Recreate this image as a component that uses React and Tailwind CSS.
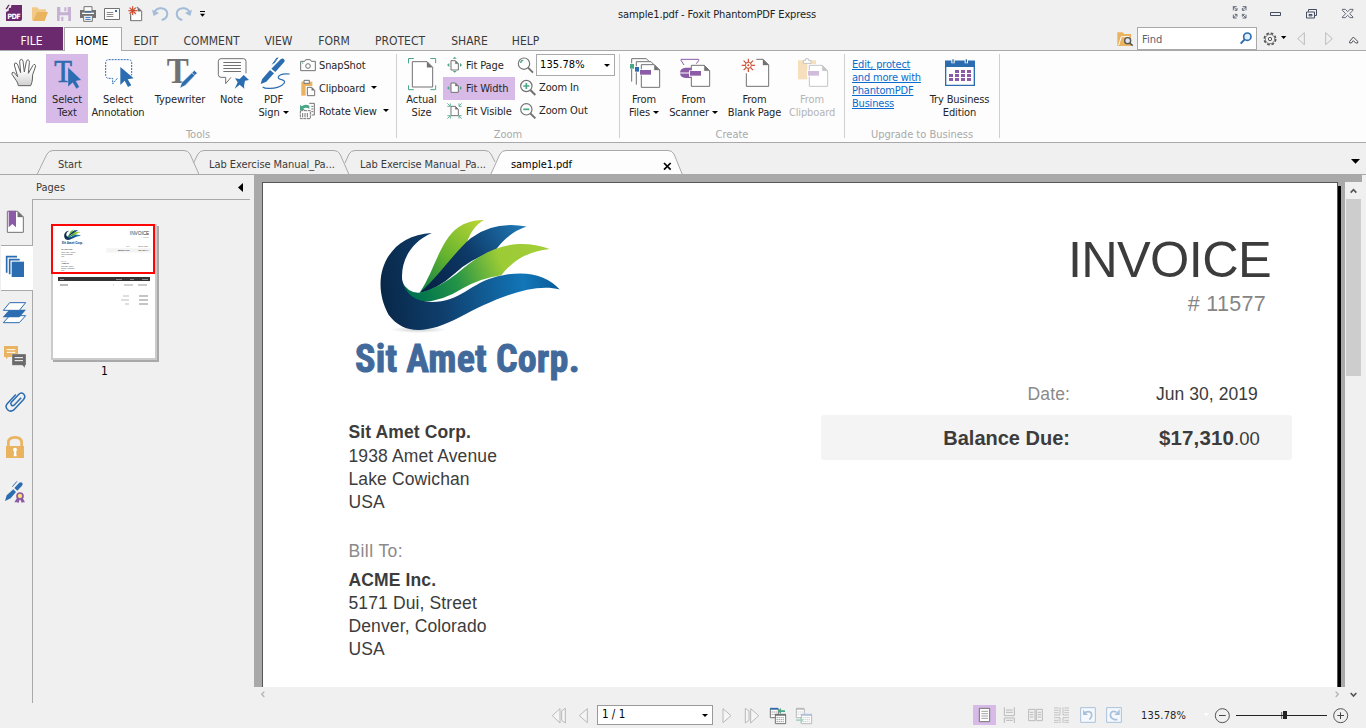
import React from "react";

const B = "#2c6cb0", G = "#727272", GR = "#4aa785", OR = "#e9b35f", PU = "#8c5ba6", LG = "#b9b9b9";

/* Icons are drawn on a grid of three units per pixel. */
const Ic = ({ v, children, className = "" }) => {
  const [, , w, h] = v.split(" ").map(Number);
  return (
    <svg viewBox={v} width={w / 3} height={h / 3} className={"block shrink-0 overflow-visible " + className} fill="none">
      {children}
    </svg>
  );
};

const Star = ({ x, y, r = 14 }) => (
  <g stroke="#d0492f" strokeWidth="3.500">
    {[0, 45, 90, 135].map((a) => (
      <path key={a} d={`M${x - r} ${y}h${r * 2}`} transform={`rotate(${a} ${x} ${y})`} />
    ))}
  </g>
);

const Cursor = ({ x, y }) => (
  <path d={`M${x} ${y}l40 34-18 3 11 18-10 5-10-19-13 13z`} fill={B} />
);

const Page = ({ x, y, w, h, f = 16, c = G }) => (
  <>
    <path d={`M${x} ${y}h${w - f}l${f} ${f}v${h - f}h${-w}z`} fill="#fff" stroke={c} strokeWidth="3" />
    <path d={`M${x + w - f} ${y}v${f}h${f}z`} fill={c} stroke={c} />
  </>
);

const Caret = ({ className = "" }) => (
  <svg viewBox="0 0 6 3" width="6" height="3" className={"inline-block shrink-0 " + className}><path d="M0 0h6L3 3z" fill="#000" /></svg>
);

function TitleBar() {
  return (
    <div className="flex h-[27px]">
      <Ic v="0 0 84 81">
        <path d="M27 24l6-1 1-8h32v42q0 6-6 6H18V36l8-4z" fill="#6b2a6d" />
        <path d="M18 27l6-6M22 20l6-5" stroke="#6b2a6d" strokeWidth="4" />
        <text x="22" y="56" fill="#fff" fontFamily="DejaVu Sans Condensed" fontWeight="bold" fontSize="22" textLength="40">PDF</text>
      </Ic>
      <Ic v="84 0 72 81"><path d="M96 22h15l6 6h21v9h-26l-13 24h-3z" fill="#f2c988" /><path d="M111 36h33l-10 27H98z" fill="#e9b35f" /></Ic>
      <Ic v="156 0 72 81"><path d="M171 21h42v42h-42z" fill="#c6b0d4" /><path d="M181 21h22v16h-22zM179 46h26v17h-26z" fill="#f0f0f0" /><path d="M193 22h6v12h-6zM184 50h6v13h-6z" fill="#c6b0d4" /></Ic>
      <Ic v="228 0 72 81"><path d="M240 30h48v24h-48z" fill={G} /><path d="M252 20h24v14h-24z" fill="#fff" stroke={G} strokeWidth="3" /><path d="M246 38h36v4h-36z" fill="#fff" /><path d="M251 46h26v18h-26z" fill="#fff" stroke={G} strokeWidth="3" /><path d="M255 36h18M256 52h16M256 58h16" stroke={B} strokeWidth="3" /></Ic>
      <Ic v="300 0 72 81"><path d="M313.500 25.500h45v33h-45z" fill="#fff" stroke={G} strokeWidth="3" /><path d="M320 37.500h20M320 43.500h20M320 49.500h20" stroke={G} strokeWidth="2.500" /><path d="M345 30h6v6h-6z" fill={B} /></Ic>
      <Ic v="372 0 72 81"><Page x={392} y={22} w={33} h={40} f={12} /><path d="M384 17h26v30h-26z" fill="#f0f0f0" /><path d="M392 42v20" stroke={G} strokeWidth="3" /><Star x={398} y={32} r={13} /></Ic>
      <Ic v="444 0 72 81"><path d="M463 38q6-15 22-13t17 17q-2 15-17 18" stroke="#a3bcd8" strokeWidth="6" /><path d="M456 29l5 19 16-9z" fill="#a3bcd8" /></Ic>
      <Ic v="516 0 72 81"><path d="M569 38q-6-15-22-13t-17 17q2 15 17 18" stroke="#a3bcd8" strokeWidth="6" /><path d="M576 29l-5 19-16-9z" fill="#a3bcd8" /></Ic>
      <Ic v="588 0 42 81"><path d="M600 34.500h15" stroke="#000" strokeWidth="3" /><path d="M600 41h15l-7.500 9z" fill="#000" /></Ic>
      <div className="w-[1014px] pt-[2px] text-center text-[11px] leading-[26px] tracking-[-0.14px] text-[#222]">sample1.pdf - Foxit PhantomPDF Express</div>
      <Ic v="372 0 426 81" className="-ml-[0px]">
        <g stroke="#454d60" strokeWidth="3">
          <path d="M400 31V20h10M400 20l9 9M428 20h10v11M438 20l-9 9M400 44v10h10M400 54l9-9M428 54h10V44M438 54l-9-9M404 31h7v-7M434 31h-7v-7M404 43h7v7M434 43h-7v7" strokeWidth="2.500" />
          <path d="M511.500 37.500h30v9h-30z" />
          <path d="M625.500 34.500v-6h24v18h-6M619.500 36h24v18h-24zM627 43.500h9v4h-9z" />
          <path d="M727 28h9l7 7 7-7h9v3l-10 10 10 10v2h-9l-7-7-7 7h-9v-2l10-10-10-10z" strokeWidth="2.500" />
        </g>
      </Ic>
    </div>
  );
}

const menu = [["EDIT", "w-[48px]"], ["COMMENT", "w-[83px]"], ["VIEW", "w-[51px]"], ["FORM", "w-[60px]"], ["PROTECT", "w-[72px]"], ["SHARE", "w-[67px]"], ["HELP", "w-[45px]"]];

function MenuBar() {
  return (
    <div className="flex h-[24px] border-b border-[#a9a9a9] text-[12px] leading-[28px] text-[#3b3b3b]">
      <div className="h-[23px] w-[63px] bg-[#6b2a6d] text-center text-white">FILE</div>
      <div className="ml-px -mb-px h-[24px] w-[58px] border border-b-0 border-[#a9a9a9] bg-[#fdfdfd] pr-[2px] text-center leading-[26px] text-black">HOME</div>
      {menu.map(([t, w]) => <div key={t} className={w + " text-center"}>{t}</div>)}
      <div className="ml-auto flex">
        <Ic v="42 81 69 69"><path d="M52 97h16l4 5h21v36H52z" fill="#e9b35f" /><path d="M56 136l8-26h24" stroke="#fff" strokeWidth="3" /><circle cx="83" cy="122" r="9" fill="#dfe8ee" stroke="#555" strokeWidth="4" /><path d="M89 129l9 8" stroke="#555" strokeWidth="5" /></Ic>
        <div className="flex h-[23px] w-[120px] justify-between border border-[#a9a9a9] bg-white pl-[4px] text-[11px] leading-[23px] text-[#5a6070]">
          Find
          <Ic v="411 84 54 63"><circle cx="439" cy="110" r="11" fill="#e3eefb" stroke={B} strokeWidth="5" /><path d="M431 118l-12 13" stroke={B} strokeWidth="6" /></Ic>
        </div>
        <Ic v="471 81 327 69">
          <circle cx="510" cy="117" r="17" stroke="#555" strokeWidth="5" strokeDasharray="8 5.350" /><circle cx="510" cy="117" r="14" fill="#f0f0f0" stroke="#555" strokeWidth="2" /><circle cx="510" cy="117" r="5" stroke="#555" strokeWidth="3" />
          <path d="M543 108h16l-8 9z" fill="#000" />
          <path d="M613 98v36l-20-18zM677 98v36l20-18z" stroke="#b0b0b0" strokeWidth="2.500" />
          <path d="M749 124l11-13 13 13v5h-6l-7-7-6 7h-5z" stroke="#50505a" strokeWidth="3" />
        </Ic>
      </div>
    </div>
  );
}

function Tool({ w, icon, a, b, caret, active, dim }) {
  return (
    <div className={`flex h-[69px] shrink-0 flex-col items-center pt-[3px] ${w} ${active ? "bg-[#d7bae8]" : ""} ${dim ? "text-[#b4b4b4]" : ""}`}>
      {icon}
      <div className="mt-[2px] text-center leading-[13px] whitespace-nowrap">
        <div>{a}</div>
        {b && <div>{b}{caret && <Caret className="mb-[2px] ml-[3px]" />}</div>}
      </div>
    </div>
  );
}

function Group({ w, name, children }) {
  return (
    <div className={`flex h-[84px] shrink-0 flex-col border-r border-[#d0d0d0] ${w}`}>
      <div className="flex h-[69px]">{children}</div>
      <div className="h-[15px] pt-[4px] text-center leading-[15px] tracking-[0px] text-[#a9a9a9]">{name}</div>
    </div>
  );
}

const Small = ({ icon, t, caret, active, w = "", g = "gap-[3px]", low = "pt-[2px]" }) => (
  <div className={`flex h-[23px] items-center whitespace-nowrap ${g} ${w} ${active ? "bg-[#d7bae8]" : ""}`}>
    {icon}<span className={low}>{t}</span>{caret && <Caret className="mb-[2px] ml-[3px]" />}
  </div>
);

const FitPage = ({ y }) => <Page x={483} y={y} w={22} h={28} f={9} />;

function Mag({ y, sign }) {
  return (
    <g transform={sign ? undefined : "translate(-7 0)"}>
      <circle cx="709" cy={y} r="17" stroke={G} strokeWidth="3.500" />
      <path d={`M721 ${y + 12}l15 15`} stroke={G} strokeWidth="6" />
      {sign ? <path d={sign === "+" ? `M700 ${y}h18M709 ${y - 9}v18` : `M700 ${y}h18`} stroke={GR} strokeWidth="5" /> : <path d={`M699 ${y - 2}q0-8 8-8`} stroke={GR} strokeWidth="4" />}
    </g>
  );
}

function Ribbon() {
  return (
    <div className="flex h-[92px] border-b border-[#a9a9a9] bg-[#fdfdfd] pt-[3px] text-[11px] tracking-[-0.12px] text-[#262626]">
      <Group w="w-[397px]" name="Tools">
        <Tool w="ml-[2px] w-[44px]" a="Hand" icon={
          <Ic v="6 171 132 102">
            <defs><linearGradient id="hand" x1="0" y1="0" x2="0" y2="1"><stop offset=".4" stopColor="#fff" /><stop offset="1" stopColor="#cfcfcf" /></linearGradient></defs>
            <path d="M51 257q-1-8-6-15L32 223q-2-6 4-6 4 0 7 6l6 7-10-35q0-7 5-6 4 1 6 8l8 21-3-34q1-6 5-6t5 6l4 32 6-31q2-7 6-5 4 1 3 8l-3 32 14-24q3-5 6-2 3 2 1 7l-8 23-1 16q-1 8-5 17z" transform="translate(4 0)" fill="url(#hand)" stroke="#606060" strokeWidth="3" strokeLinejoin="round" />
          </Ic>} />
        <Tool w="w-[42px]" a="Select" b="Text" active icon={
          <Ic v="138 171 126 102"><text x="163" y="246" fontFamily="Liberation Serif" fontSize="96" stroke={B} strokeWidth="2" textLength="53" lengthAdjust="spacingAndGlyphs" fill={B}>T</text><path d="M204 202l40 38-16 3 10 18-9 5-11-18-14 12z" fill={B} stroke="#d7bae8" strokeWidth="1" /></Ic>} />
        <Tool w="w-[60px]" a="Select" b="Annotation" icon={
          <Ic v="264 171 180 102"><path d="M352 235l-14 17v-17h-11q-10 0-10-10v-37q0-9 9-9h59q10 0 10 9v38" stroke={B} strokeWidth="3" strokeDasharray="6 3" /><Cursor x={361} y={201} /></Ic>} />
        <Tool w="w-[64px]" a="Typewriter" icon={
          <Ic v="444 171 192 102"><text x="500" y="249" fontFamily="Liberation Serif" fontWeight="bold" fontSize="108" textLength="66" lengthAdjust="spacingAndGlyphs" fill={G}>T</text><path d="M583 211l9 8-37 38-16 8 6-17z" fill={B} stroke="#fdfdfd" strokeWidth="2" /><path d="M576 219l9 8" stroke="#fff" strokeWidth="2" /></Ic>} />
        <Tool w="w-[39px]" a="Note" icon={
          <Ic v="636 171 117 102"><path d="M693 232l-16 19v-19h-14q-8 0-8-8v-40q0-8 8-8h67q8 0 8 8v36" stroke={G} strokeWidth="3" /><path d="M670 187.500h53M670 196.500h53M670 205.500h53M670 214.500h53" stroke={G} strokeWidth="3" /><path d="M731 225l16 15-12 2-3 15 1 9-14-12-15 12 9-19-8-12 14 2z" fill={B} /></Ic>} />
        <Tool w="w-[45px]" a="PDF" b="Sign" caret icon={
          <Ic v="753 171 135 102"><path d="M842 178q7-5 11 1 3 4-1 8l-26 29-12-10zM810 210l12 10-23 25-17 7 4-14z" fill={B} /><path d="M817 193l14-20M822 190l12-17" stroke={B} strokeWidth="3" /><path d="M869 222q-30-3-34 9-1 6 10 8 16 4 3 15-13 10-38 11-16 1-22-4" stroke={B} strokeWidth="3.500" /></Ic>} />
        <div className="ml-[4px] flex flex-col">
          <Small t="SnapShot" icon={<Ic v="30 12 48 69"><path d="M32 34h12l3-5h14l3 5h12v28H32z" stroke={G} strokeWidth="3" /><circle cx="54" cy="48" r="7" stroke={G} strokeWidth="3" /><path d="M36 39h4" stroke={GR} strokeWidth="3" /></Ic>} />
          <Small t="Clipboard" caret icon={<Ic v="30 81 48 69"><path d="M34 95h33v42H34z" fill={OR} /><path d="M42 91h16v9H42z" fill="#fff" stroke={G} strokeWidth="3" /><path d="M47 108h30v32H47z" fill="#fff" /><Page x={52} y={112} w={22} h={25} f={9} /></Ic>} />
          <Small t="Rotate View" caret icon={<Ic v="30 150 48 69"><path d="M58 160h15v35h-8M64 169h6M64 177h6M64 185h6" stroke={G} strokeWidth="3" /><path d="M31 182h30v24H31z" fill="#fff" stroke={G} strokeWidth="3" strokeDasharray="9 2" /><path d="M38 189v13M45 189v13M52 189v13" stroke={G} strokeWidth="3" /><path d="M30 164l5 5q10-9 23-2v9q-12-6-18 0l5 4H30z" fill={GR} /></Ic>} />
        </div>
      </Group>
      <Group w="w-[223px]" name="Zoom">
        <Tool w="ml-[3px] w-[43px]" a="Actual" b="Size" icon={
          <Ic v="330 18 129 102"><path d="M355.500 37V22.500h16M421 22.500h16v14M355.500 103v13h16M437 103v13h-16" stroke={GR} strokeWidth="3" /><Page x={367} y={32} w={61} h={76} f={17} /></Ic>} />
        <div className="flex flex-col">
          <Small w="w-[72px]" g="gap-[1px]" t="Fit Page" icon={<Ic v="459 12 66 69"><FitPage y={32} /><path d="M494 20l6 6h-12zM494 68l6-5h-12zM471 45l7-6v12zM516 45l-6-6v12z" fill={GR} /></Ic>} />
          <Small w="w-[72px]" g="gap-[1px]" t="Fit Width" active icon={<Ic v="459 81 66 69"><FitPage y={99} /><path d="M471 114l7-6v12zM516 114l-6-6v12z" fill={GR} /></Ic>} />
          <Small w="w-[72px]" g="gap-[1px]" t="Fit Visible" icon={<Ic v="459 150 66 69"><FitPage y={169} /><path d="M472 160l8 8M515 160l-8 8M472 206l8-8M515 206l-8-8M472 169h9v-9M515 169h-8v-9M472 197h9v9M515 197h-8v9" stroke={GR} strokeWidth="2.500" /></Ic>} />
        </div>
        <div className="ml-[3px] flex flex-col">
          <div className="flex h-[23px]">
            <Ic v="684 12 54 69"><Mag y={41} /></Ic>
            <div className="flex h-[22px] w-[79px] items-center justify-between border border-[#a9a9a9] bg-white pr-[4px] pl-[3px] tracking-[0.1px] text-black">135.78%<Caret /></div>
          </div>
          <Small g="gap-[2px]" low="" t="Zoom In" icon={<Ic v="684 81 57 69"><Mag y={108} sign="+" /></Ic>} />
          <Small g="gap-[2px]" low="" t="Zoom Out" icon={<Ic v="684 150 57 69"><Mag y={178} sign="-" /></Ic>} />
        </div>
      </Group>
      <Group w="w-[225px]" name="Create">
        <Tool w="w-[48px]" a="From" b="Files" caret icon={
          <Ic v="30 21 144 102"><path d="M65 95V26h44l8 8M79 104V35h44l7 7" stroke={G} strokeWidth="3" /><Page x={94} y={44} w={55} h={68} f={16} /><path d="M58 40h16v17H58z" fill="#fff" /><path d="M60 42h12v14H60z" fill={GR} /><path d="M73 49h16v18H73z" fill="#fff" /><path d="M75 51h12v14H75z" fill={B} /><path d="M88 58h38v18H88z" fill="#fff" /><path d="M90 60h33v14H90z" fill={PU} /></Ic>} />
        <Tool w="w-[51px]" a="From" b="Scanner" caret icon={
          <Ic v="174 21 153 102"><path d="M222 45l-9-14v-3h53v4l-7 9" stroke={PU} strokeWidth="3" /><path d="M210 68q0-14 17-15h17v31h-17q-17-2-17-16z" fill={PU} /><path d="M210 69h28" stroke="#fff" strokeWidth="3" /><Page x={244} y={46} w={55} h={63} f={16} /><path d="M237 61h37v19h-37z" fill="#fff" /><path d="M240 63h33v14h-33z" fill={PU} /></Ic>} />
        <Tool w="ml-[1px] w-[69px]" a="From" b="Blank Page" icon={
          <Ic v="330 21 207 102"><Page x={409} y={28} w={67} h={81} f={17} /><path d="M390 21h49v49h-49z" fill="#fdfdfd" /><Star x={415} y={46} r={20} /><circle cx="415" cy="46" r="9" fill="#fff" stroke="#d0492f" strokeWidth="3" /><circle cx="415" cy="46" r="3" fill="#d0492f" /></Ic>} />
        <Tool w="-ml-[1px] w-[48px]" a="From" b="Clipboard" dim icon={
          <Ic v="534 21 144 102"><path d="M564 31h54v57h-54z" fill="#f5dfbd" /><path d="M580 40v-9h7v-5h8v5h8v9z" fill="#fff" stroke="#c4c4c4" strokeWidth="3" /><path d="M592 42h60v68h-60z" fill="#fdfdfd" /><Page x={598} y={46} w={55} h={63} f={16} c="#c4c4c4" /><path d="M591 61h39v19h-39z" fill="#fff" /><path d="M594 63h33v14h-33z" fill="#d0bddb" /></Ic>} />
      </Group>
      <Group w="w-[155px]" name="Upgrade to Business">
        <div className="mt-[4px] ml-[7px] w-[71px] leading-[13px] tracking-[-0.2px] whitespace-nowrap text-[#0b6cce] underline underline-offset-1">
          <div>Edit, protect</div><div>and more with</div><div>PhantomPDF</div><div>Business</div>
        </div>
        <Tool w="ml-[2px] w-[69px]" a="Try Business" b="Edition" icon={
          <Ic v="945 21 207 102"><path d="M1007 34h86v72h-86z" fill="#fff" stroke={B} strokeWidth="4" /><path d="M1005 32h90v19h-90z" fill={B} /><path d="M1029 26v14M1069 26v14" stroke="#fdfdfd" strokeWidth="10" /><path d="M1029 28v10M1069 28v10" stroke={B} strokeWidth="4" />
            {[0, 1, 2].map((r) => [0, 1, 2, 3].map((c) => (r || c) ? <rect key={r + "-" + c} x={1017 + c * 18} y={60 + r * 12} width="12" height="9" fill={PU} /> : null))}
          </Ic>} />
      </Group>
    </div>
  );
}

function DocTabs() {
  return (
    <div className="relative flex h-[32px] items-center border-b border-[#a9a9a9] pt-[13px] text-[11px] tracking-[-0.05px] text-[#3b3b3b]">
      <svg className="absolute top-0 left-0" width="1366" height="31" fill="#f0f0f0" stroke="#a9a9a9">
        <path d="M37 31.500L47 11Q49 7.500 53 7.500H184Q188 7.500 190 11L199 31.500" />
        <path d="M193.500 20L198 11Q200 7.500 204 7.500H334Q338 7.500 340 11L349 31.500" fill="none" />
        <path d="M345 20L349 11Q351 7.500 355 7.500H485Q489 7.500 491 11L495 19" fill="none" />
        <path d="M490.500 32L500 11Q502 7.500 506 7.500H668Q672 7.500 674 11L682.500 32" fill="#fdfdfd" />
      </svg>
      <div className="relative ml-[58px] w-[151px]">Start</div>
      <div className="relative w-[151px]">Lab Exercise Manual_Pa...</div>
      <div className="relative w-[151px]">Lab Exercise Manual_Pa...</div>
      <div className="relative w-[151px] text-black">sample1.pdf</div>
      <Ic v="0 0 27 27" className="relative mt-[2px] ml-[1px]"><path d="M3 3l20 20M23 3L3 23" stroke="#000" strokeWidth="5" /></Ic>
      <Ic v="0 0 27 15" className="relative mr-[6px] mb-[7px] ml-auto"><path d="M0 0h27L13.500 14z" fill="#000" /></Ic>
    </div>
  );
}

function Rail() {
  return (
    <div className="flex h-[528px] w-[32px] flex-col">
      <Ic v="0 105 96 210"><Page x={22} y={214} w={48} h={63} f={17} /><path d="M26 212h22v50l-11-10-11 10z" fill={PU} /></Ic>
      <div className="relative -mr-px ml-px h-[46px] w-[32px] border-y border-[#a9a9a9] bg-white">
        <Ic v="3 318 96 132"><path d="M20 398v-48h31M29 403v-44h30" stroke={B} strokeWidth="5" /><path d="M35 365h37v46H35z" fill={B} /></Ic>
      </div>
      <Ic v="0 453 96 132"><path d="M10 548l19-21h48l-19 21z" fill="#fff" stroke={B} strokeWidth="3" /><path d="M8 532l20-23h50l-20 23z" fill={B} /><path d="M10 511l19-23h48l-19 23z" fill="#fff" stroke={B} strokeWidth="3" /></Ic>
      <Ic v="0 585 96 135"><path d="M12 618h42v33H24l-6 7v-7h-6z" fill={OR} /><path d="M20 629h26M20 637h26" stroke="#fff" strokeWidth="3" /><path d="M36 642h42v34h-3v8l-8-8H36z" fill="#6a6a6a" stroke="#f0f0f0" /><path d="M44 653h25M44 662h25" stroke="#fff" strokeWidth="3" /></Ic>
      <Ic v="0 0 96 135"><g transform="rotate(-47 44 65)" stroke={B} strokeWidth="4.500"><path d="M66 71H35q-5-1-5-6t5-6h33q11 0 11 10t-12 11H24Q12 78 12 66t12-13h38" /></g></Ic>
      <Ic v="0 135 96 135"><path d="M25 199v-11q0-16 20-16t20 16v11" stroke={OR} strokeWidth="8" /><path d="M18 198h54v36H18z" fill={OR} /><circle cx="45" cy="209" r="6" fill="#fff" /><path d="M43 209h5l2 20h-9z" fill="#fff" /></Ic>
      <Ic v="0 270 96 135"><path d="M57 309q6-4 10 0 3 4-1 8l-14 15-9-8zM40 328l8 8-16 19-17 8 5-17z" fill={B} /><path d="M37 320l14-16" stroke={B} strokeWidth="3" /><path d="M51 354l-8 13h9l3 3 5-13 6 13 2-3h7l-7-13" fill={PU} /><circle cx="60" cy="348" r="9" fill="#ffe070" stroke={PU} strokeWidth="5" /></Ic>
    </div>
  );
}

function Logo() {
  return (
    <svg viewBox="0 0 780 400" width="260" height="133" className="block">
      <defs>
        <linearGradient id="wing" x1="120" y1="300" x2="660" y2="250" gradientUnits="userSpaceOnUse"><stop offset="0" stopColor="#082747" /><stop offset=".35" stopColor="#0f3f6e" /><stop offset=".8" stopColor="#1276b8" /><stop offset="1" stopColor="#0b5a98" /></linearGradient>
        <linearGradient id="leaf" x1="240" y1="290" x2="430" y2="80" gradientUnits="userSpaceOnUse"><stop offset="0" stopColor="#007a4c" /><stop offset=".5" stopColor="#65b32e" /><stop offset="1" stopColor="#b4d334" /></linearGradient>
        <linearGradient id="leaf2" x1="240" y1="300" x2="620" y2="140" gradientUnits="userSpaceOnUse"><stop offset="0" stopColor="#00744d" /><stop offset=".3" stopColor="#249447" /><stop offset=".65" stopColor="#9ccb35" /><stop offset="1" stopColor="#a3ce38" /></linearGradient>
        <linearGradient id="navy" x1="250" y1="280" x2="550" y2="80" gradientUnits="userSpaceOnUse"><stop offset="0" stopColor="#061f42" /><stop offset=".5" stopColor="#0d3a68" /><stop offset="1" stopColor="#1f78b4" /></linearGradient>
        <radialGradient id="shade"><stop offset="0" stopColor="#c9cdd2" /><stop offset="1" stopColor="#fff" /></radialGradient>
      </defs>
      <ellipse cx="235" cy="390" rx="85" ry="10" fill="url(#shade)" />
      <path d="M238 280C275 225 288 165 325 112Q362 60 432 60Q392 82 376 143Q330 175 298 225Q275 262 238 280z" fill="url(#leaf)" />
      <path d="M238 280C300 225 340 160 392 115Q462 62 560 80Q500 100 462 158Q400 170 345 220Q290 270 238 280z" fill="url(#navy)" />
      <path d="M185 245Q205 283 242 278Q295 265 350 222C420 160 510 105 630 147Q540 155 484 226Q420 235 370 265Q290 315 225 304Q190 285 185 245z" fill="url(#leaf2)" />
      <path d="M275 99C205 130 182 190 186 240Q200 312 290 306C370 300 400 240 490 226Q600 205 660 269C570 245 440 310 360 352C260 405 190 405 145 345C85 235 140 105 275 99z" fill="url(#wing)" />
    </svg>
  );
}

function Invoice() {
  return (
    <div className="flex h-[504px] w-[1074px] bg-white font-['Liberation_Sans',Arial,sans-serif] text-[17.5px] leading-[23px] tracking-[0.12px] text-[#3c3c3c]">
      <div className="w-[420px] pt-[17px] pl-[77px]">
        <Logo />
        <div className="mt-[3px] ml-[15px] h-[46px] text-[38px] leading-[46px] font-bold tracking-[0.2px] whitespace-nowrap text-[#41699b] [-webkit-text-stroke:0.9px_#41699b] font-['Liberation_Sans_Narrow','Roboto_Condensed',sans-serif]">Sit Amet Corp.</div>
        <div className="mt-[39px] ml-[8.500px]">
          <div className="font-bold">Sit Amet Corp.</div><div className="mt-px">1938 Amet Avenue</div><div>Lake Cowichan</div><div>USA</div>
          <div className="mt-[26px] tracking-[0.4px] text-[#8a8a8a]">Bill To:</div>
          <div className="mt-[6px] font-bold">ACME Inc.</div><div>5171 Dui, Street</div><div>Denver, Colorado</div><div>USA</div>
        </div>
      </div>
      <div className="flex flex-1 flex-col items-end pt-[48px] pr-[45px]">
        <div className="mr-[21px] text-[50.5px] leading-[58px] tracking-[-0.650px]">INVOICE</div>
        <div className="mt-[3px] mr-[26px] text-[21.5px] leading-[24px] tracking-[0.3px] text-[#858585]">#&nbsp;11577</div>
        <div className="mt-[67px] flex w-[471px]"><div className="w-[249px] text-right text-[#8a8a8a]">Date:</div><div className="ml-[86px] tracking-[0.05px]">Jun 30, 2019</div></div>
        <div className="mt-[9px] flex h-[45px] w-[471px] rounded-[3px] bg-[#f4f4f4] text-[20px] leading-[46px] font-bold tracking-[0px]"><div className="w-[249px] text-right">Balance Due:</div><div className="ml-[89px] text-[20.500px] tracking-[0.12px]">$17,310<span className="text-[18.500px] font-normal">.00</span></div></div>
      </div>
    </div>
  );
}

function Thumbnail() {
  return (
    <div className="mt-[24px] ml-[18px] flex w-[107px] flex-col">
      <div className="relative h-[136px] w-[106px] border-2 border-[#cbcbcb] bg-white shadow-[2px_2px_0_#a9a9a9]">
        <div className="h-[49px] w-[102px] overflow-hidden"><div className="h-0 w-0 origin-top-left scale-[0.0955]" aria-hidden="true"><Invoice /></div></div>
        <div className="mx-[5px] mt-[2px] flex h-[4px] items-center justify-end gap-[8px] bg-[#333] pr-[2px]"><i className="mr-auto ml-[2px] h-px w-[4px] bg-[#888]" /><i className="h-px w-[6px] bg-[#888]" /><i className="h-px w-[4px] bg-[#888]" /><i className="h-px w-[6px] bg-[#888]" /></div>
        <div className="mx-[5px] mt-[3px] flex items-center justify-end gap-[5px] pr-[3px]"><i className="mr-auto ml-[2px] h-[2px] w-[8px] bg-[#bbb]" /><i className="h-[2px] w-px bg-[#ddd]" /><i className="ml-[5px] h-[2px] w-[9px] bg-[#d2d2d2]" /><i className="h-[2px] w-[9px] bg-[#ccc]" /></div>
        <div className="mt-[9px] mr-[7px] flex flex-col items-end gap-[2px]">
          {["w-[6px]", "w-[8px]", "w-[4px]"].map((w) => <div key={w} className="flex gap-[10px]"><i className={"h-[2px] bg-[#dedede] " + w} /><i className="h-[2px] w-[9px] bg-[#c5c5c5]" /></div>)}
        </div>
        <div className="absolute -top-[2px] -left-[2px] h-[50px] w-[104px] border-2 border-[#fd0505]" />
      </div>
      <div className="mt-[4px] text-center text-[12px] leading-[15px] text-black">1</div>
    </div>
  );
}

function Main() {
  return (
    <div className="flex h-[528px]">
      <div className="flex w-[254px]">
        <Rail />
        <div className="flex w-[218px] flex-col">
          <div className="flex h-[25px] items-center justify-between border-b border-[#a9a9a9] pr-[7px] pl-[4px] text-[11px] text-[#3b3b3b]"><span className="pt-[2px]">Pages</span><svg width="5" height="9"><path d="M5 0v9L0 4.500z" /></svg></div>
          <div className="flex-1 border-l border-[#a9a9a9]"><Thumbnail /></div>
        </div>
      </div>
      <div className="flex flex-1 flex-col">
        <div className="flex h-[512px]">
          <div className="w-[1091px] overflow-hidden bg-[#a9a9a9] pt-[7px] pl-[8px]">
            <div className="flex w-[1079px]">
              <div className="shrink-0 border-t border-r border-l border-[#555]"><Invoice /></div>
              <div className="mt-[4px] w-[3px] bg-black" />
            </div>
          </div>
          <div className="flex w-[21px] flex-col">
            <div className="mr-[4px] h-[7px] bg-[#a9a9a9]" />
            <Ic v="0 0 48 51"><path d="M17 32l8.500-9 8.500 9" stroke="#555" strokeWidth="5" /></Ic>
            <div className="ml-px h-[177px] w-[15px] bg-[#cdcdcd]" />
          </div>
        </div>
        <div className="flex h-[16px]">
          <Ic v="0 0 48 48"><path d="M31 14l-8 8 8 8" stroke="#b5b5b5" strokeWidth="4" /></Ic>
          <Ic v="0 0 48 48" className="ml-auto"><path d="M20 14l8 8-8 8" stroke="#b5b5b5" strokeWidth="4" /></Ic>
          <Ic v="0 0 63 48"><path d="M17 18l8.500 9 8.500-9" stroke="#555" strokeWidth="5" /></Ic>
        </div>
      </div>
    </div>
  );
}

function StatusBar() {
  const nav = { stroke: LG, strokeWidth: 3, fill: "#f5f5f5" };
  return (
    <div className="flex h-[25px] pl-[546px] text-[11px] text-[#262626]">
      <Ic v="18 69 81 75"><path d="M60 86v43L37 107zM65 93l11-8v44l-11-8z" {...nav} /></Ic>
      <Ic v="99 69 66 75"><path d="M142 86v42l-24-21z" {...nav} /></Ic>
      <div className="mt-[2px] ml-[2px] flex h-[20px] w-[116px] items-center justify-between border border-[#999] bg-white pr-[4px] pl-[4px] text-[11.500px] text-black">1 / 1<Caret /></div>
      <Ic v="519 69 75 75"><path d="M549 86v42l24-21z" {...nav} /></Ic>
      <Ic v="594 69 84 75"><path d="M616 85l11 8v28l-11 8zM632 86v43l24-22z" {...nav} /></Ic>
      {[0, 1].map((d) => (
        <Ic key={d} v={d ? "756 69 72 75" : "678 69 78 75"}>
          <g transform={d ? "translate(78 0)" : undefined} stroke={d ? LG : G} strokeWidth="3">
            <path d="M691 87h24v26h-24z" fill="#fff" /><path d="M690 86h25" stroke={d ? LG : B} strokeWidth="5" /><path d="M695 96h16M695 103h16" strokeDasharray="3 3" />
            <path d="M706 105h31v26h-31z" fill="#fff" /><path d="M705 104h33" stroke={d ? "#a9c1db" : G} strokeWidth="5" /><path d="M710 113h23M710 119h23M710 125h23" strokeDasharray="3 3" />
          </g>
          {d ? <path d="M768 118h13v-6l10 8-10 9v-6h-13z" fill="#a9d3c4" /> : <path d="M735 91h-12v-7l-10 9 10 9v-6h12z" fill={GR} />}
        </Ic>
      ))}
      <div className="mt-[2px] ml-[157px] h-[20px] w-[23px] bg-[#d7bae8]"><Ic v="99 75 69 60"><path d="M118 85h31v40h-31z" fill="#fff" stroke={G} strokeWidth="3" /><path d="M124 94h20M124 101h20M124 108h20M124 115h20" stroke={G} strokeWidth="2" /></Ic></div>
      <Ic v="168 69 78 75"><path d="M193 82v25h30V82M193 129v-15h30v15M198 90h20M198 97h20M198 121h20" stroke={LG} strokeWidth="3" /></Ic>
      <Ic v="246 69 84 75"><path d="M266 88h19v34h-19zM289 88h18v34h-18zM270 97h10M270 104h10M270 111h10M293 97h10M293 104h10M293 111h10" stroke={LG} strokeWidth="3" /></Ic>
      <Ic v="330 69 78 75"><path d="M360 82v23h-18M369 82v23h18M342 113h18v16M387 113h-18v16M342 84h14M342 91h14M342 98h14M373 84h14M373 91h14M373 98h14M342 121h14M342 127h14M373 121h14M373 127h14" stroke={LG} strokeWidth="2.500" /></Ic>
      <Ic v="408 69 78 75"><path d="M422 83h44v44h-44z" fill="#f5f9fd" stroke="#a9c1db" strokeWidth="3" /><path d="M434 98q12-6 19 0 6 10-5 21" stroke="#a9c1db" strokeWidth="5" /><path d="M429 89v16h15z" fill="#a9c1db" /></Ic>
      <Ic v="486 69 78 75"><path d="M500 83h44v44h-44z" fill="#f5f9fd" stroke="#a9c1db" strokeWidth="3" /><path d="M529 96q-12-5-17 4-4 14 12 19h8" stroke="#a9c1db" strokeWidth="5" /><path d="M539 88v17h-16z" fill="#a9c1db" /></Ic>
      <div className="ml-[13px] w-[61px] leading-[25px] tracking-[0.150px]">135.78%</div>
      <Ic v="786 69 492 75"><path d="M791 100h16l-8 8z" fill="#fff" /><circle cx="847" cy="107" r="21" stroke="#555" strokeWidth="3" /><path d="M837 106.500h20M1192 106.500h20M1201.500 97v20" stroke="#444" strokeWidth="3" /><path d="M888 106.500h273" stroke="#222" strokeWidth="3" /><path d="M1029 93h12v24h-12z" fill="#222" /><path d="M1025 96v21" stroke="#222" strokeWidth="2" /><circle cx="1202" cy="107" r="21" stroke="#555" strokeWidth="3" /></Ic>
    </div>
  );
}

export default function App() {
  return (
    <div className="h-[728px] w-[1366px] overflow-hidden bg-[#f0f0f0] font-['DejaVu_Sans_Condensed','DejaVu_Sans',sans-serif]">
      <TitleBar />
      <MenuBar />
      <Ribbon />
      <DocTabs />
      <Main />
      <StatusBar />
    </div>
  );
}
